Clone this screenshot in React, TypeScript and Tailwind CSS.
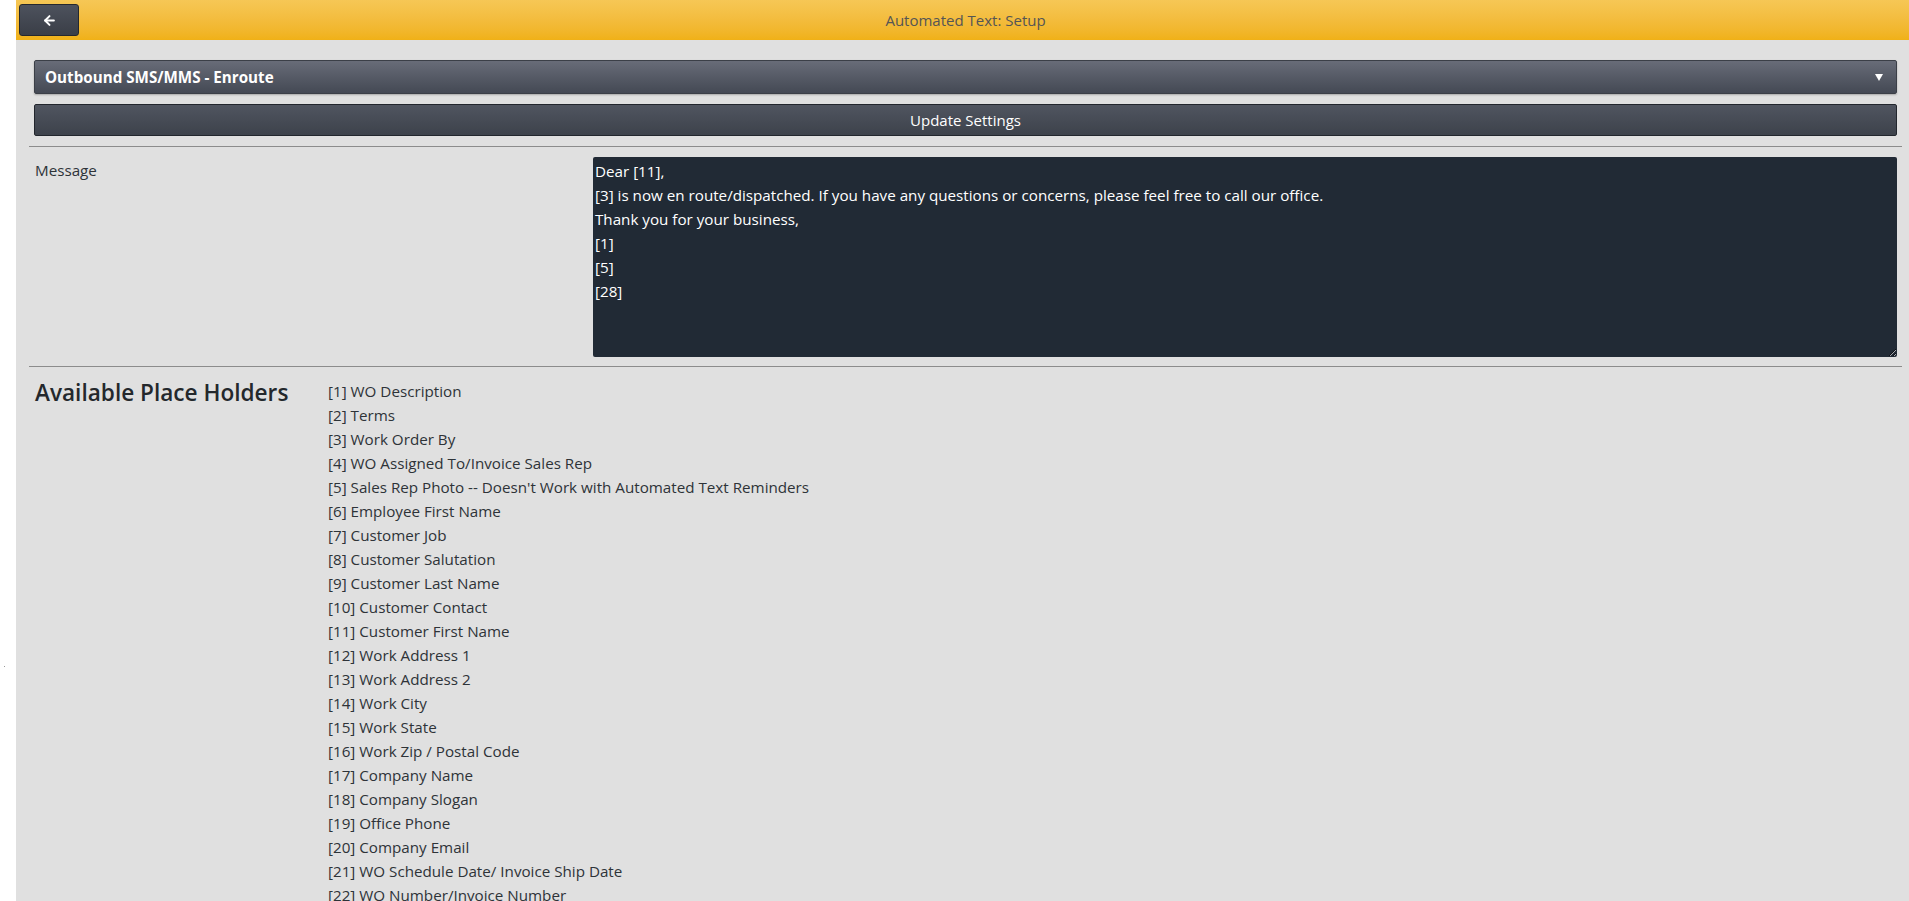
import { ArrowLeft } from "lucide-react";

const placeHolders = [
  "WO Description",
  "Terms",
  "Work Order By",
  "WO Assigned To/Invoice Sales Rep",
  "Sales Rep Photo -- Doesn't Work with Automated Text Reminders",
  "Employee First Name",
  "Customer Job",
  "Customer Salutation",
  "Customer Last Name",
  "Customer Contact",
  "Customer First Name",
  "Work Address 1",
  "Work Address 2",
  "Work City",
  "Work State",
  "Work Zip / Postal Code",
  "Company Name",
  "Company Slogan",
  "Office Phone",
  "Company Email",
  "WO Schedule Date/ Invoice Ship Date",
  "WO Number/Invoice Number",
];

const message = `Dear [11],
[3] is now en route/dispatched. If you have any questions or concerns, please feel free to call our office.
Thank you for your business,
[1]
[5]
[28]`;

export default function App() {
  return (
    <div className="flex h-[901px] overflow-hidden bg-white font-['Open_Sans',sans-serif] text-[15.2px] text-[#2e3338]">
      <div className="w-4 shrink-0 pt-[666px] pl-[4px]">
        <div className="h-px w-px bg-[#999]" />
      </div>

      <div className="flex min-w-0 flex-1 flex-col bg-[#e0e0e0]">
        <header className="relative flex h-10 shrink-0 items-center justify-center bg-gradient-to-b from-[#f6c755] to-[#f0b116] pl-[6px]">
          <button className="absolute top-1 left-[3px] flex h-8 w-[60px] items-center justify-center rounded-[3px] border border-[#25282e] bg-gradient-to-b from-[#4d525d] to-[#3a3e47] text-white">
            <ArrowLeft size={15} strokeWidth={3.2} />
          </button>
          <h1 className="text-[15px] text-[#555]">Automated Text: Setup</h1>
        </header>

        <main className="flex flex-col pt-5 pr-[7px] pl-[13px]">
          <div className="mx-[5px] flex h-[34px] items-center justify-between rounded-[2px] border border-[#3b3f47] bg-gradient-to-b from-[#686c78] to-[#444954] pr-[13px] pl-[10px] text-white shadow-[0_1px_2px_rgba(0,0,0,0.25)]">
            <span className="text-[15.2px] font-bold">Outbound SMS/MMS - Enroute</span>
            <svg width="8" height="7" viewBox="0 0 8 7">
              <path d="M0 0h8L4 7z" fill="#fff" />
            </svg>
          </div>

          <button className="mx-[5px] mt-[10px] flex h-8 items-center justify-center rounded-[2px] border border-[#22262d] bg-gradient-to-b from-[#505560] to-[#3d424b] text-[15px] text-white">
            Update Settings
          </button>

          <div className="mt-[10px] h-px bg-[#8c8c8c]" />

          <section className="flex pt-[10px] pb-[9px]">
            <div className="w-[564px] shrink-0 pt-[1px] pl-[6px] leading-6">Message</div>
            <textarea
              readOnly
              defaultValue={message}
              className="mr-[5px] h-[200px] flex-1 rounded-[2px] bg-[#212a35] px-[2px] pt-[2px] font-['Open_Sans',sans-serif] text-[15.2px] leading-6 text-white outline-none"
            />
          </section>

          <div className="h-px bg-[#8c8c8c]" />

          <section className="flex pt-[12px]">
            <h2 className="w-[299px] shrink-0 pl-[6px] text-[22.6px] leading-7 font-semibold text-[#24282c]">
              Available Place Holders
            </h2>
            <ul className="flex flex-col">
              {placeHolders.map((label, i) => (
                <li key={label} className="leading-6">
                  [{i + 1}] {label}
                </li>
              ))}
            </ul>
          </section>
        </main>
      </div>
    </div>
  );
}
